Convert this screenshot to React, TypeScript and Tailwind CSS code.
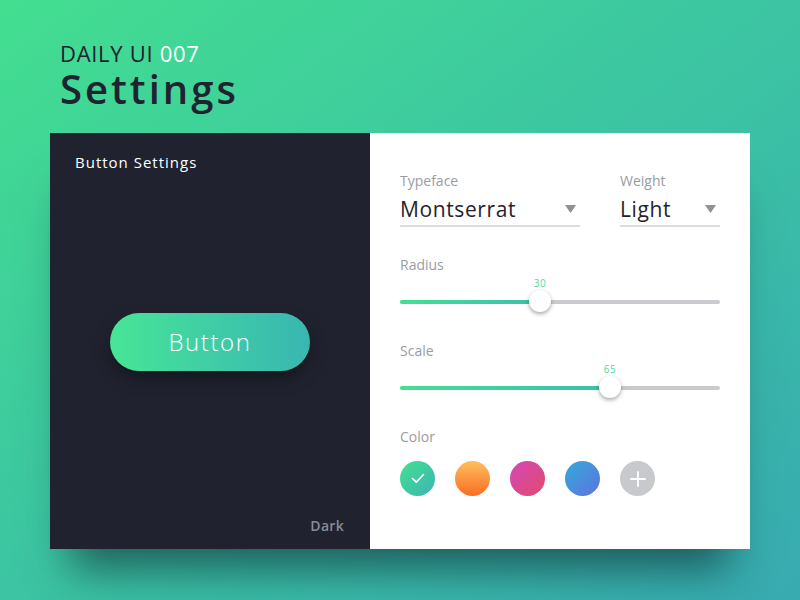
import React, { useState } from 'react';

type Swatch = { id: string; from: string; to: string; dir: string };

const swatches: Swatch[] = [
  { id: 'green', from: '#45df92', to: '#39b6b1', dir: 'to bottom right' },
  { id: 'orange', from: '#fdbf5f', to: '#fa6d22', dir: 'to bottom' },
  { id: 'pink', from: '#d449b6', to: '#e24a6e', dir: 'to bottom right' },
  { id: 'blue', from: '#33abd6', to: '#5e72e2', dir: 'to bottom right' },
];

const Caret = () => (
  <svg width="11" height="8" viewBox="0 0 11 8" className="shrink-0">
    <path d="M0 0h11L5.5 8z" fill="#8e9096" />
  </svg>
);

const Select = ({ label, value, className }: { label: string; value: string; className: string }) => (
  <div className={className}>
    <div className="text-[14px] leading-none text-[#9a9ca1]">{label}</div>
    <div className="mt-[8px] flex items-center justify-between border-b-2 border-[#dcdde0] pb-[3px] pr-[4px]">
      <span className="text-[21px] font-medium leading-[26px] tracking-[0.6px] text-[#1f2330]">{value}</span>
      <Caret />
    </div>
  </div>
);

const Slider = ({ label, value, className }: { label: string; value: number; className: string }) => {
  // thumb centre in px along the 320px track
  const pos = value === 30 ? 140 : 210;
  return (
    <div className={className}>
      <div className="text-[14px] leading-none text-[#9a9ca1]">{label}</div>
      <div className="relative mt-[28px] h-[4px] w-[320px] rounded-full bg-[#c9cacd]">
        <div
          className="absolute left-0 top-0 h-[4px] rounded-full bg-gradient-to-r from-[#45df92] to-[#3abfae]"
          style={{ width: pos }}
        />
        <div
          className="absolute top-[-10px] h-[22px] w-[22px] -translate-x-1/2 rounded-full bg-white shadow-[0_2px_4px_rgba(0,0,0,0.35)]"
          style={{ left: pos }}
        />
        <div
          className="absolute top-[-22px] -translate-x-1/2 text-[10px] leading-none tracking-[0.5px] text-[#4ed99d]"
          style={{ left: pos }}
        >
          {value}
        </div>
      </div>
    </div>
  );
};

export default function App() {
  const [selected, setSelected] = useState('green');

  return (
    <div
      className="flex h-[600px] w-[800px] flex-col overflow-hidden bg-gradient-to-br from-[#43de8f] to-[#38aab1]"
      style={{ fontFamily: '"Open Sans", "DejaVu Sans", sans-serif' }}
    >
      <div className="pl-[60px] pt-[42px]">
        <div className="text-[22px] font-normal leading-[22px] tracking-[0.7px] text-[#1f2330]">
          DAILY UI <span className="text-white">007</span>
        </div>
        <div className="mt-[4px] text-[40px] font-semibold leading-[42px] tracking-[3px] text-[#1f2330]">
          Settings
        </div>
      </div>

      <div className="ml-[50px] mt-[23px] flex h-[416px] w-[700px] shadow-[0_40px_40px_-20px_rgba(15,55,60,0.7)]">
        <div className="flex w-[320px] flex-col bg-[#20232f] px-[25px] pt-[20px] pb-[15px]">
          <div className="text-[15px] font-medium leading-[18px] tracking-[1px] text-white">Button Settings</div>
          <div className="flex flex-1 items-center justify-center pb-[6px]">
            <button className="h-[58px] w-[200px] rounded-full bg-gradient-to-r from-[#48e596] to-[#39b6b1] text-[24px] font-light tracking-[1.6px] text-white shadow-[0_8px_16px_rgba(0,0,0,0.35)]">
              Button
            </button>
          </div>
          <div className="self-end pr-[1px] text-[14px] font-semibold leading-[16px] tracking-[0.3px] text-[#898c95]">Dark</div>
        </div>

        <div className="flex-1 bg-white pl-[30px] pt-[41px]">
          <div className="flex">
            <Select label="Typeface" value="Montserrat" className="w-[180px]" />
            <Select label="Weight" value="Light" className="ml-[40px] w-[100px]" />
          </div>

          <Slider label="Radius" value={30} className="mt-[31px]" />
          <Slider label="Scale" value={65} className="mt-[40px]" />

          <div className="mt-[40px] text-[14px] leading-none text-[#9a9ca1]">Color</div>
          <div className="mt-[17px] flex gap-[20px]">
            {swatches.map(s => (
              <button
                key={s.id}
                onClick={() => setSelected(s.id)}
                className="flex h-[35px] w-[35px] items-center justify-center rounded-full"
                style={{ backgroundImage: `linear-gradient(${s.dir}, ${s.from}, ${s.to})` }}
              >
                {selected === s.id && (
                  <svg width="14" height="11" viewBox="0 0 14 11">
                    <path d="M1.5 5.5l3.8 3.6L12.5 1.5" fill="none" stroke="white" strokeWidth="1.6" strokeLinecap="round" strokeLinejoin="round" />
                  </svg>
                )}
              </button>
            ))}
            <button className="flex h-[35px] w-[35px] items-center justify-center rounded-full bg-[#c8c9cc]">
              <svg width="16" height="16" viewBox="0 0 16 16">
                <path d="M8 1v14M1 8h14" stroke="white" strokeWidth="1.8" strokeLinecap="round" />
              </svg>
            </button>
          </div>
        </div>
      </div>
    </div>
  );
}
